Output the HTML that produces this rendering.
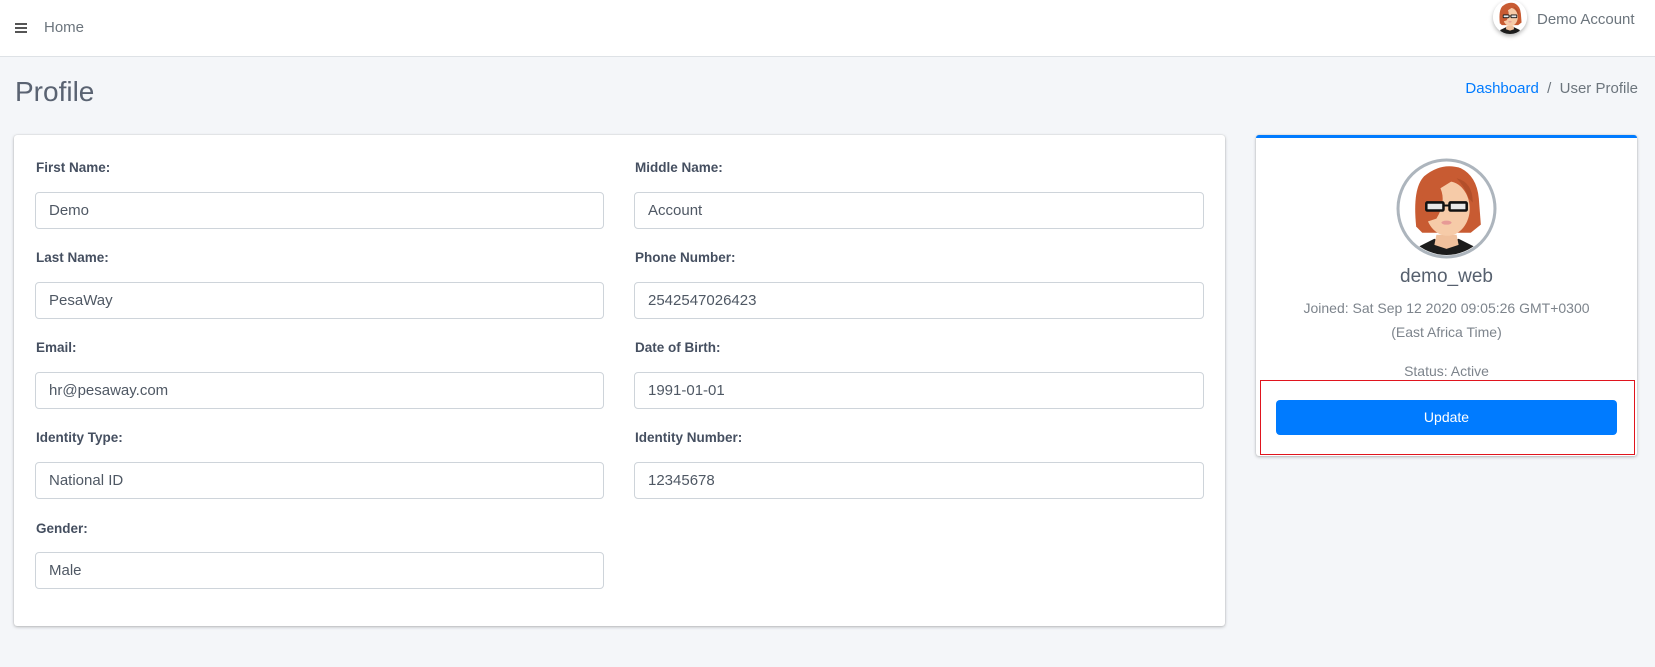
<!DOCTYPE html>
<html><head><meta charset="utf-8"><style>
*{box-sizing:border-box;margin:0;padding:0}
body{width:1655px;height:667px;background:#f4f6f9;font-family:"Liberation Sans",sans-serif;position:relative;overflow:hidden;color:#495057}
.hdr{position:absolute;left:0;top:0;width:1655px;height:57px;background:#fff;border-bottom:1px solid #dee2e6}
.abs{position:absolute}
.card{position:absolute;background:#fff;border-radius:3px;box-shadow:0 0 1px rgba(0,0,0,.2),0 1px 3px rgba(0,0,0,.25)}
.lbl{position:absolute;font-size:13.5px;font-weight:bold;color:#454f60}
.inp{position:absolute;height:37px;border:1px solid #ced4da;border-radius:4px;font-size:15px;color:#4f5864;padding:10px 13px;background:#fff;line-height:16px}
.c{position:absolute;left:1256px;width:381px;text-align:center;color:#7d848c}
</style></head><body>
<svg width="0" height="0" style="position:absolute"><defs>
<g id="av"><path d="M18 100 L22 88 L38 80 L50 86 L62 80 L78 88 L82 100Z" fill="#1c1c1c"/><path d="M40 76 L60 76 L62 86 L50 90 L38 86Z" fill="#f0c09c"/><path d="M20 68 Q16 30 28 18 Q45 4 64 10 Q80 18 82 40 L84 66 L74 74 L26 74Z" fill="#c85b32"/><ellipse cx="51" cy="50" rx="22" ry="27" fill="#f6cba8"/><path d="M26 30 Q40 14 60 20 L44 30 Q50 44 40 60 L28 64 Z" fill="#c85b32"/><path d="M60 20 Q76 24 76 44 L72 40 Q68 28 60 20Z" fill="#b34f2a"/><rect x="30" y="44" width="17" height="8" rx="1" fill="#e8e8e8" stroke="#111" stroke-width="2.5"/><rect x="53" y="44" width="17" height="8" rx="1" fill="#e8e8e8" stroke="#111" stroke-width="2.5"/><line x1="47" y1="47" x2="53" y2="47" stroke="#111" stroke-width="2"/><ellipse cx="50" cy="64" rx="5" ry="2" fill="#e79a96"/></g>
<clipPath id="cb"><circle cx="50" cy="50" r="46"/></clipPath>
<clipPath id="ca"><circle cx="50" cy="50" r="50"/></clipPath>
</defs></svg>
<div class="hdr">
 <div class="abs" style="left:15px;top:23px;width:12px;height:2px;background:#555;box-shadow:0 4px 0 #555,0 8px 0 #555"></div>
 <div class="abs" style="left:44px;top:19px;font-size:15px;color:#6c757d">Home</div>
 <div class="abs" style="left:1493px;top:0px;width:34px;height:34px;border-radius:50%;box-shadow:0 2px 4px rgba(0,0,0,.3)"></div>
 <svg class="abs" style="left:1493px;top:0px" width="34" height="34" viewBox="0 0 100 100"><g clip-path="url(#ca)"><rect width="100" height="100" fill="#fff"/><use href="#av"/></g></svg>
 <div class="abs" style="left:1537px;top:11px;font-size:15px;color:#6c757d">Demo Account</div>
</div>
<div class="abs" style="left:15px;top:76px;font-size:28px;color:#5a6372">Profile</div>
<div class="abs" style="right:17px;top:80px;font-size:15px;color:#6c757d"><span style="color:#007bff">Dashboard</span>&nbsp; / &nbsp;User Profile</div>

<div class="card" style="left:14px;top:135px;width:1211px;height:491px"></div>
<div class="lbl" style="left:36px;top:160px">First Name:</div>
<div class="lbl" style="left:635px;top:160px">Middle Name:</div>
<div class="inp" style="left:35px;top:192px;width:569px">Demo</div>
<div class="inp" style="left:634px;top:192px;width:570px">Account</div>
<div class="lbl" style="left:36px;top:250px">Last Name:</div>
<div class="lbl" style="left:635px;top:250px">Phone Number:</div>
<div class="inp" style="left:35px;top:282px;width:569px">PesaWay</div>
<div class="inp" style="left:634px;top:282px;width:570px">2542547026423</div>
<div class="lbl" style="left:36px;top:340px">Email:</div>
<div class="lbl" style="left:635px;top:340px">Date of Birth:</div>
<div class="inp" style="left:35px;top:372px;width:569px">hr@pesaway.com</div>
<div class="inp" style="left:634px;top:372px;width:570px">1991-01-01</div>
<div class="lbl" style="left:36px;top:430px">Identity Type:</div>
<div class="lbl" style="left:635px;top:430px">Identity Number:</div>
<div class="inp" style="left:35px;top:462px;width:569px">National ID</div>
<div class="inp" style="left:634px;top:462px;width:570px">12345678</div>
<div class="lbl" style="left:36px;top:521px">Gender:</div>
<div class="inp" style="left:35px;top:552px;width:569px">Male</div>

<div class="card" style="left:1256px;top:135px;width:381px;height:321px;border-top:3px solid #007bff"></div>
<svg class="abs" style="left:1396px;top:158px" width="101" height="101" viewBox="0 0 100 100"><circle cx="50" cy="50" r="48" fill="#fff" stroke="#adb5bd" stroke-width="3"/><g clip-path="url(#cb)"><use href="#av"/></g></svg>
<div class="c" style="top:266px;font-size:19px;color:#56606e">demo_web</div>
<div class="c" style="top:300px;font-size:14px">Joined: Sat Sep 12 2020 09:05:26 GMT+0300</div>
<div class="c" style="top:324px;font-size:14px">(East Africa Time)</div>
<div class="c" style="top:363px;font-size:14px">Status: Active</div>
<div class="abs" style="left:1260px;top:380px;width:375px;height:75px;border:1.5px solid #e0141e"></div>
<div class="abs" style="left:1276px;top:400px;width:341px;height:35px;background:#007bff;border-radius:4px;color:#fff;font-size:14px;text-align:center;line-height:35px">Update</div>
</body></html>
